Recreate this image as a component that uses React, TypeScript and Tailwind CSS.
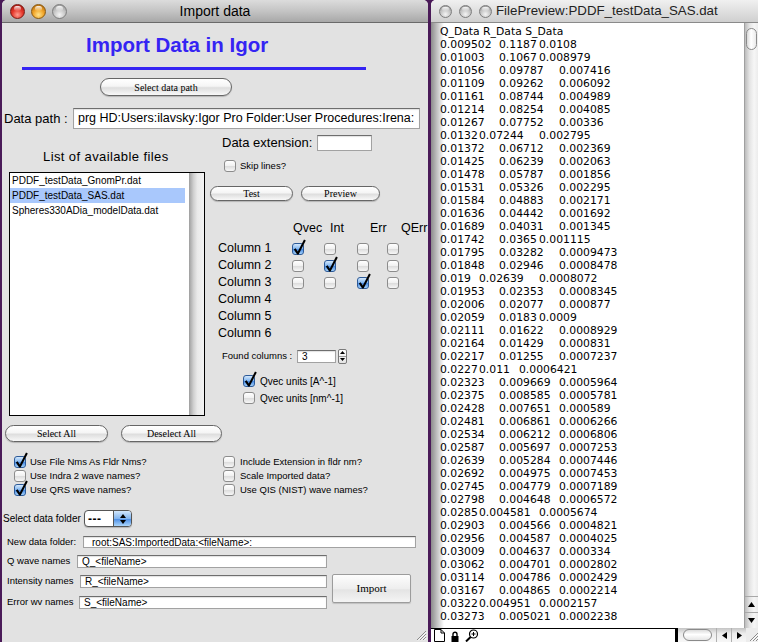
import React from 'react';

const SANS = "font-['Liberation_Sans',Arial,sans-serif]";
const SERIF = "font-['Liberation_Serif','Times_New_Roman',serif]";
const GENEVA = "font-['DejaVu_Sans',Verdana,sans-serif]";

// Datos del preview (Q, R, S)
const PREVIEW: [string, string, string][] = [
  ['0.009502', '0.1187', '0.0108'],
  ['0.01003', '0.1067', '0.008979'],
  ['0.01056', '0.09787', '0.007416'],
  ['0.01109', '0.09262', '0.006092'],
  ['0.01161', '0.08744', '0.004989'],
  ['0.01214', '0.08254', '0.004085'],
  ['0.01267', '0.07752', '0.00336'],
  ['0.0132', '0.07244', '0.002795'],
  ['0.01372', '0.06712', '0.002369'],
  ['0.01425', '0.06239', '0.002063'],
  ['0.01478', '0.05787', '0.001856'],
  ['0.01531', '0.05326', '0.002295'],
  ['0.01584', '0.04883', '0.002171'],
  ['0.01636', '0.04442', '0.001692'],
  ['0.01689', '0.04031', '0.001345'],
  ['0.01742', '0.0365', '0.001115'],
  ['0.01795', '0.03282', '0.0009473'],
  ['0.01848', '0.02946', '0.0008478'],
  ['0.019', '0.02639', '0.0008072'],
  ['0.01953', '0.02353', '0.0008345'],
  ['0.02006', '0.02077', '0.000877'],
  ['0.02059', '0.0183', '0.0009'],
  ['0.02111', '0.01622', '0.0008929'],
  ['0.02164', '0.01429', '0.000831'],
  ['0.02217', '0.01255', '0.0007237'],
  ['0.0227', '0.011', '0.0006421'],
  ['0.02323', '0.009669', '0.0005964'],
  ['0.02375', '0.008585', '0.0005781'],
  ['0.02428', '0.007651', '0.000589'],
  ['0.02481', '0.006861', '0.0006266'],
  ['0.02534', '0.006212', '0.0006806'],
  ['0.02587', '0.005697', '0.0007253'],
  ['0.02639', '0.005284', '0.0007446'],
  ['0.02692', '0.004975', '0.0007453'],
  ['0.02745', '0.004779', '0.0007189'],
  ['0.02798', '0.004648', '0.0006572'],
  ['0.0285', '0.004581', '0.0005674'],
  ['0.02903', '0.004566', '0.0004821'],
  ['0.02956', '0.004587', '0.0004025'],
  ['0.03009', '0.004637', '0.000334'],
  ['0.03062', '0.004701', '0.0002802'],
  ['0.03114', '0.004786', '0.0002429'],
  ['0.03167', '0.004865', '0.0002214'],
  ['0.0322', '0.004951', '0.0002157'],
  ['0.03273', '0.005021', '0.0002238'],
];

// Igor separa las columnas con tabs: paradas cada 20px
const textW = (s: string) => s.length * 6.5 - (s.split('.').length - 1) * 1.5;
const nextStop = (end: number) => {
  let stop = 19;
  while (stop < end + 1) stop += 20;
  return stop;
};

const Light = ({ color, size }: { color: 'red' | 'amber' | 'gray'; size: string }) => {
  const bg = {
    red: 'bg-[radial-gradient(circle_at_50%_75%,#ff9d90_0%,#e6392d_45%,#9a100a_100%)] border-[#7a1a14]',
    amber: 'bg-[radial-gradient(circle_at_50%_75%,#ffe38c_0%,#f1a62b_45%,#a45b06_100%)] border-[#8a5a10]',
    gray: 'bg-[radial-gradient(circle_at_50%_75%,#f4f4f4_0%,#c4c4c4_50%,#8e8e8e_100%)] border-[#7d7d7d]',
  }[color];
  return (
    <div className={`relative shrink-0 rounded-full border ${bg} ${size}`}>
      <div className="absolute left-[22%] right-[22%] top-[6%] h-[40%] rounded-full bg-linear-to-b from-white/90 to-white/5" />
    </div>
  );
};

const Pill = ({ label, className }: { label: string; className: string }) => (
  <div className={`
    flex items-center justify-center shrink-0
    rounded-full border border-[#666666]
    bg-[linear-gradient(to_bottom,#ffffff_0%,#f5f5f5_45%,#dedede_55%,#f8f8f8_100%)]
    shadow-[0_1px_1px_rgba(0,0,0,0.2)]
    text-[10px] text-black ${SERIF} ${className}
  `}>
    {label}
  </div>
);

const Check = ({ on = false }: { on?: boolean }) => (
  <div className={`relative w-[12px] h-[12px] shrink-0 rounded-[3px] border ${on
    ? 'border-[#2d5a98] bg-[linear-gradient(to_bottom,#d4e8fc,#7db3ef_50%,#4a8ce3_55%,#a4d2fb)]'
    : 'border-[#8c8c8c] bg-[linear-gradient(to_bottom,#ffffff,#f0f0f0_50%,#dedede_55%,#f7f7f7)]'
  }`}>
    {on && (
      <svg className="absolute left-[-1px] top-[-5px]" width="15" height="17" viewBox="0 0 15 17">
        <path d="M1.8 10.6 L3.6 9.2 L5.8 12.6 L12 0.6 L13.8 1.4 L6.6 15.4 L5.2 15.4 Z" fill="#000" />
      </svg>
    )}
  </div>
);

const Field = ({ value = '', className }: { value?: string; className: string }) => (
  <div className={`
    shrink-0 flex items-center overflow-hidden whitespace-nowrap
    bg-white border border-[#a2a2a2] border-t-[#6e6e6e]
    shadow-[inset_0_1px_1px_rgba(0,0,0,0.12)]
    text-black ${className}
  `}>
    {value}
  </div>
);

const Grip = () => (
  <svg width="12" height="12" viewBox="0 0 12 12">
    <path d="M11 2 L2 11 M11 5 L5 11 M11 8 L8 11" stroke="#8a8a8a" strokeWidth="1" />
    <path d="M11.5 3 L3 11.5 M11.5 6 L6 11.5 M11.5 9 L9 11.5" stroke="#ffffff" strokeWidth="1" />
  </svg>
);

const ImportWindow = () => (
  <div className="w-[426px] h-[642px] shrink-0 flex flex-col bg-[#e2e2e2] rounded-t-[5px] overflow-hidden">
    {/* Barra de título */}
    <div className="
      h-[23px] shrink-0 grid grid-cols-[1fr_auto_1fr] items-center
      border-b border-[#6a6a6a]
      bg-[linear-gradient(to_bottom,#dcdcdc,#c4c4c4_50%,#a8a8a8)]
    ">
      <div className="flex items-center gap-[6px] pl-[8px] pt-[1px]">
        <Light color="red" size="w-[15px] h-[15px]" />
        <Light color="amber" size="w-[15px] h-[15px]" />
        <Light color="gray" size="w-[15px] h-[15px]" />
      </div>
      <div className="text-[14px] text-black">Import data</div>
      <div />
    </div>

    <div className="flex-1 flex flex-col min-h-0">
      <div className="mt-[10px] pl-[84px] h-[24px] leading-[24px] text-[20.5px] font-bold text-[#3524f3] whitespace-nowrap">
        Import Data in Igor
      </div>
      <div className="mt-[10px] ml-[20px] w-[344px] h-[3px] bg-[#3524f3]" />

      <Pill label="Select data path" className="mt-[8px] ml-[98px] w-[132px] h-[18px]" />

      <div className="mt-[12px] flex items-center h-[21px]">
        <div className="pl-[2px] w-[71px] text-[13px] whitespace-nowrap">Data path :</div>
        <Field
          value="prg HD:Users:ilavsky:Igor Pro Folder:User Procedures:Irena:"
          className="w-[347px] h-[21px] pl-[4px] text-[12.5px]"
        />
      </div>

      {/* Zona central: lista de archivos + columnas */}
      <div className="flex">
        <div className="w-[208px] shrink-0 flex flex-col">
          <div className="mt-[21px] h-[14px] leading-[14px] pl-[41px] text-[13px] tracking-[0.4px] whitespace-nowrap">
            List of available files
          </div>
          <div className="mt-[8px] ml-[7px] w-[196px] h-[244px] border border-black bg-white flex">
            <div className="flex-1 flex flex-col text-[10px] pr-[4px]">
              <div className="h-[15px] flex items-center pl-[2px]">PDDF_testData_GnomPr.dat</div>
              <div className="h-[15px] flex items-center pl-[2px] bg-[#a9c8fc]">PDDF_testData_SAS.dat</div>
              <div className="h-[15px] flex items-center pl-[2px]">Spheres330ADia_modelData.dat</div>
            </div>
            <div className="w-[15px] shrink-0 bg-[linear-gradient(to_right,#9e9e9e,#cfcfcf_30%,#e9e9e9_55%,#f3f3f3)]" />
          </div>
        </div>

        <div className="flex-1 flex flex-col min-w-0">
          <div className="mt-[6px] h-[16px] flex items-center">
            <div className="pl-[12px] w-[107px] text-[13px] whitespace-nowrap">Data extension:</div>
            <Field className="w-[55px] h-[16px]" />
          </div>

          <div className="mt-[9px] h-[12px] flex items-center pl-[14px] gap-[4px] text-[9.5px]">
            <Check />
            <span>Skip lines?</span>
          </div>

          <div className="mt-[14px] flex gap-[8px]">
            <Pill label="Test" className="w-[83px] h-[15px]" />
            <Pill label="Preview" className="w-[79px] h-[15px]" />
          </div>

          <div className="mt-[20px] h-[14px] leading-[14px] flex pl-[83px] text-[12.5px] whitespace-nowrap">
            <span className="w-[37px] shrink-0">Qvec</span>
            <span className="w-[40px] shrink-0">Int</span>
            <span className="w-[31px] shrink-0">Err</span>
            <span className="shrink-0">QErr</span>
          </div>

          <div className="mt-[5px] flex flex-col text-[12.5px]">
            {[1, 2, 3, 4, 5, 6].map(n => (
              <div key={n} className="h-[17px] flex items-center">
                <div className="pl-[8px] w-[82px] shrink-0 whitespace-nowrap">Column {n}</div>
                {n <= 3 && (
                  <>
                    <div className="w-[32px] shrink-0"><Check on={n === 1} /></div>
                    <div className="w-[33px] shrink-0"><Check on={n === 2} /></div>
                    <div className="w-[30px] shrink-0"><Check on={n === 3} /></div>
                    <Check />
                  </>
                )}
              </div>
            ))}
          </div>

          <div className="mt-[6px] h-[16px] flex items-center">
            <div className="pl-[12px] w-[87px] text-[9.5px] whitespace-nowrap">Found columns :</div>
            <Field value="3" className="w-[39px] h-[13px] pl-[4px] text-[10px]" />
            <div className="ml-[2px] w-[9px] h-[15px] flex flex-col border border-[#7a7a7a] rounded-[2px] bg-[linear-gradient(to_bottom,#ffffff,#e4e4e4)]">
              <div className="flex-1 flex items-center justify-center border-b border-[#9a9a9a]">
                <svg width="5" height="3" viewBox="0 0 5 3"><path d="M0 3 L2.5 0 L5 3 Z" fill="#000" /></svg>
              </div>
              <div className="flex-1 flex items-center justify-center">
                <svg width="5" height="3" viewBox="0 0 5 3"><path d="M0 0 L2.5 3 L5 0 Z" fill="#000" /></svg>
              </div>
            </div>
          </div>

          <div className="mt-[11px] h-[12px] flex items-center pl-[33px] gap-[5px] text-[10px] whitespace-nowrap">
            <Check on />
            <span>Qvec units [A^-1]</span>
          </div>
          <div className="mt-[5px] h-[12px] flex items-center pl-[33px] gap-[5px] text-[10px] whitespace-nowrap">
            <Check />
            <span>Qvec units [nm^-1]</span>
          </div>
        </div>
      </div>

      <div className="mt-[9px] h-[17px] flex pl-[3px] gap-[13px]">
        <Pill label="Select All" className="w-[103px] h-[17px]" />
        <Pill label="Deselect All" className="w-[101px] h-[17px]" />
      </div>

      {/* Opciones */}
      <div className="mt-[13px] grid grid-cols-[209px_1fr] pl-[12px] text-[9.5px]">
        <div className="h-[14px] flex items-center gap-[4px] whitespace-nowrap"><Check on /><span>Use File Nms As Fldr Nms?</span></div>
        <div className="h-[14px] flex items-center gap-[5px] whitespace-nowrap"><Check /><span>Include Extension in fldr nm?</span></div>
        <div className="h-[14px] flex items-center gap-[4px] whitespace-nowrap"><Check /><span>Use Indra 2 wave names?</span></div>
        <div className="h-[14px] flex items-center gap-[5px] whitespace-nowrap"><Check /><span>Scale Imported data?</span></div>
        <div className="h-[14px] flex items-center gap-[4px] whitespace-nowrap"><Check on /><span>Use QRS wave names?</span></div>
        <div className="h-[14px] flex items-center gap-[5px] whitespace-nowrap"><Check /><span>Use QIS (NIST) wave names?</span></div>
      </div>

      <div className="mt-[13px] h-[17px] flex items-center pl-[1px]">
        <div className="w-[81px] text-[10px] whitespace-nowrap">Select data folder</div>
        <div className="w-[48px] h-[17px] flex rounded-[4px] border border-[#555555] overflow-hidden bg-white shadow-[0_1px_1px_rgba(0,0,0,0.2)]">
          <div className="flex-1 flex items-center pl-[3px] text-[12px] font-bold tracking-[0.5px] leading-none">---</div>
          <div className="w-[18px] flex flex-col items-center justify-center gap-[2px] border-l border-[#555555] bg-[linear-gradient(to_bottom,#d2e7fc,#82b5ef_50%,#4e8fe5_55%,#acd6fb)]">
            <svg width="6" height="4" viewBox="0 0 6 4"><path d="M0 4 L3 0 L6 4 Z" fill="#000" /></svg>
            <svg width="6" height="4" viewBox="0 0 6 4"><path d="M0 0 L3 4 L6 0 Z" fill="#000" /></svg>
          </div>
        </div>
      </div>

      <div className="mt-[9px] h-[12px] flex items-center">
        <div className="pl-[5px] w-[81px] text-[9.5px] whitespace-nowrap">New data folder:</div>
        <Field value="root:SAS:ImportedData:<fileName>:" className="w-[333px] h-[12px] pl-[8px] text-[10px]" />
      </div>

      <div className="mt-[7px] flex">
        <div className="w-[325px] shrink-0 flex flex-col">
          <div className="h-[13px] flex items-center">
            <div className="pl-[5px] w-[75px] text-[9.5px] whitespace-nowrap">Q wave names</div>
            <Field value="Q_<fileName>" className="w-[250px] h-[13px] pl-[4px] text-[10px]" />
          </div>
          <div className="mt-[7px] h-[13px] flex items-center">
            <div className="pl-[5px] w-[78px] text-[9.5px] whitespace-nowrap">Intensity names</div>
            <Field value="R_<fileName>" className="w-[247px] h-[13px] pl-[4px] text-[10px]" />
          </div>
          <div className="mt-[8px] h-[13px] flex items-center">
            <div className="pl-[5px] w-[77px] text-[9.5px] whitespace-nowrap">Error wv names</div>
            <Field value="S_<fileName>" className="w-[248px] h-[13px] pl-[4px] text-[10px]" />
          </div>
        </div>
        <div className={`
          mt-[19px] ml-[5px] w-[79px] h-[29px]
          flex items-center justify-center
          border border-[#9c9c9c] rounded-[2px]
          bg-[linear-gradient(to_bottom,#fdfdfd,#eeeeee_50%,#e4e4e4_55%,#f4f4f4)]
          shadow-[0_1px_1px_rgba(0,0,0,0.15)]
          text-[11px] ${SERIF}
        `}>
          Import
        </div>
      </div>

      <div className="mt-auto flex justify-end pr-[1px] pb-[1px]">
        <Grip />
      </div>
    </div>
  </div>
);

const PreviewWindow = () => (
  <div className="w-[327px] h-[642px] shrink-0 flex flex-col bg-white rounded-tl-[5px] overflow-hidden">
    <div className="
      h-[23px] shrink-0 flex items-center
      border-b border-[#8a8a8a]
      bg-[linear-gradient(to_bottom,#f0f0f0,#e0e0e0_50%,#cfcfcf)]
    ">
      <div className="flex items-center gap-[7px] pl-[8px] pt-[1px]">
        <Light color="gray" size="w-[13px] h-[13px]" />
        <Light color="gray" size="w-[13px] h-[13px]" />
        <Light color="gray" size="w-[13px] h-[13px]" />
      </div>
      <div className="ml-[4px] text-[13.3px] text-[#222222] whitespace-nowrap">FilePreview:PDDF_testData_SAS.dat</div>
    </div>

    <div className="flex-1 flex min-h-0">
      <div className={`relative flex-1 overflow-hidden pt-[2px] pl-[9px] text-[10.8px] text-black ${GENEVA}`}>
        <div className="h-[13px] leading-[13px] whitespace-nowrap">Q_Data R_Data S_Data</div>
        {PREVIEW.map(([q, r, s]) => {
          const c2 = nextStop(textW(q));
          const c3 = nextStop(c2 + textW(r));
          return (
            <div key={q} className="flex h-[13px] leading-[13px] whitespace-nowrap">
              <span className="shrink-0" style={{ width: c2 }}>{q}</span>
              <span className="shrink-0" style={{ width: c3 - c2 }}>{r}</span>
              <span>{s}</span>
            </div>
          );
        })}
        {/* sombra de la ventana de delante */}
        <div className="absolute left-0 top-0 bottom-0 w-[13px] bg-linear-to-r from-black/45 to-transparent" />
      </div>

      <div className="w-[14px] shrink-0 flex flex-col border-l border-[#a0a0a0] bg-[linear-gradient(to_right,#bcbcbc,#e4e4e4_35%,#f6f6f6_70%,#ececec)]">
        <div className="mt-[5px] mx-[1px] h-[22px] rounded-full border border-[#8a8a8a] bg-[linear-gradient(to_right,#d8d8d8,#ffffff_45%,#eaeaea)]" />
        <div className="flex-1" />
        <div className="h-[16px] flex items-center justify-center border-t border-[#a8a8a8]">
          <svg width="7" height="5" viewBox="0 0 7 5"><path d="M0 5 L3.5 0 L7 5 Z" fill="#000" /></svg>
        </div>
        <div className="h-[16px] flex items-center justify-center border-t border-[#a8a8a8]">
          <svg width="7" height="5" viewBox="0 0 7 5"><path d="M0 0 L3.5 5 L7 0 Z" fill="#000" /></svg>
        </div>
      </div>
    </div>

    {/* Barra inferior */}
    <div className="h-[14px] shrink-0 flex">
      <div className="w-[244px] shrink-0 flex items-end gap-[6px] pl-[3px] bg-white border-t border-black">
        <svg width="11" height="13" viewBox="0 0 11 13">
          <path d="M0.5 0.5 H7 L10.5 4 V12.5 H0.5 Z M7 0.5 V4 H10.5" fill="#fff" stroke="#000" strokeWidth="1" />
        </svg>
        <svg width="8" height="11" viewBox="0 0 8 11">
          <path d="M2 5 V3.2 A2 2 0 0 1 6 3.2 V5" fill="none" stroke="#000" strokeWidth="1.4" />
          <rect x="0.5" y="5" width="7" height="6" fill="#000" />
        </svg>
        <svg width="14" height="13" viewBox="0 0 14 13">
          <circle cx="8.5" cy="5" r="4" fill="#fff" stroke="#000" strokeWidth="1.2" />
          <path d="M6.5 5 H10.5 M8.5 3 V7" stroke="#000" strokeWidth="1" />
          <path d="M5.6 8 L1 12.5" stroke="#000" strokeWidth="2" />
        </svg>
      </div>
      <div className="w-[3px] shrink-0 bg-black" />
      <div className="flex-1 flex items-center bg-[linear-gradient(to_bottom,#c4c4c4,#ececec_40%,#f7f7f7)]">
        <div className="ml-[5px] w-[29px] h-[12px] rounded-full border border-[#8a8a8a] bg-[linear-gradient(to_bottom,#dcdcdc,#ffffff_45%,#e6e6e6)]" />
        <div className="ml-[4px] w-[15px] h-full flex items-center justify-center border-l border-[#b0b0b0]">
          <svg width="5" height="7" viewBox="0 0 5 7"><path d="M5 0 L0 3.5 L5 7 Z" fill="#000" /></svg>
        </div>
        <div className="w-[15px] h-full flex items-center justify-center border-l border-[#b0b0b0]">
          <svg width="5" height="7" viewBox="0 0 5 7"><path d="M0 0 L5 3.5 L0 7 Z" fill="#000" /></svg>
        </div>
      </div>
      <div className="w-[14px] shrink-0 flex items-end justify-end bg-[#ececec]">
        <Grip />
      </div>
    </div>
  </div>
);

export default function App() {
  return (
    <div className={`w-[758px] h-[642px] overflow-hidden flex pl-[2px] gap-[3px] bg-[#4a1a58] ${SANS}`}>
      <ImportWindow />
      <PreviewWindow />
    </div>
  );
}
